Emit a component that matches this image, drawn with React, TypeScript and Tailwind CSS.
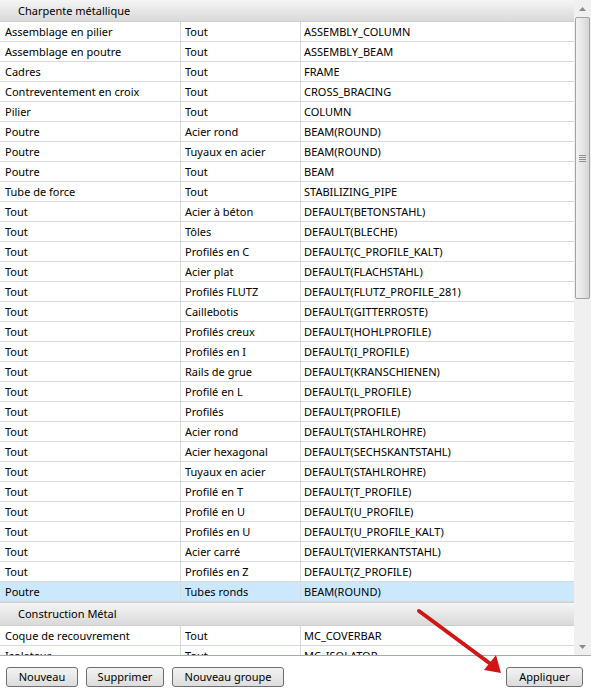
import React from "react";

type Row = [string, string, string];

const rows1: Row[] = [
  ["Assemblage en pilier", "Tout", "ASSEMBLY_COLUMN"],
  ["Assemblage en poutre", "Tout", "ASSEMBLY_BEAM"],
  ["Cadres", "Tout", "FRAME"],
  ["Contreventement en croix", "Tout", "CROSS_BRACING"],
  ["Pilier", "Tout", "COLUMN"],
  ["Poutre", "Acier rond", "BEAM(ROUND)"],
  ["Poutre", "Tuyaux en acier", "BEAM(ROUND)"],
  ["Poutre", "Tout", "BEAM"],
  ["Tube de force", "Tout", "STABILIZING_PIPE"],
  ["Tout", "Acier à béton", "DEFAULT(BETONSTAHL)"],
  ["Tout", "Tôles", "DEFAULT(BLECHE)"],
  ["Tout", "Profilés en C", "DEFAULT(C_PROFILE_KALT)"],
  ["Tout", "Acier plat", "DEFAULT(FLACHSTAHL)"],
  ["Tout", "Profilés FLUTZ", "DEFAULT(FLUTZ_PROFILE_281)"],
  ["Tout", "Caillebotis", "DEFAULT(GITTERROSTE)"],
  ["Tout", "Profilés creux", "DEFAULT(HOHLPROFILE)"],
  ["Tout", "Profilés en I", "DEFAULT(I_PROFILE)"],
  ["Tout", "Rails de grue", "DEFAULT(KRANSCHIENEN)"],
  ["Tout", "Profilé en L", "DEFAULT(L_PROFILE)"],
  ["Tout", "Profilés", "DEFAULT(PROFILE)"],
  ["Tout", "Acier rond", "DEFAULT(STAHLROHRE)"],
  ["Tout", "Acier hexagonal", "DEFAULT(SECHSKANTSTAHL)"],
  ["Tout", "Tuyaux en acier", "DEFAULT(STAHLROHRE)"],
  ["Tout", "Profilé en T", "DEFAULT(T_PROFILE)"],
  ["Tout", "Profilé en U", "DEFAULT(U_PROFILE)"],
  ["Tout", "Profilés en U", "DEFAULT(U_PROFILE_KALT)"],
  ["Tout", "Acier carré", "DEFAULT(VIERKANTSTAHL)"],
  ["Tout", "Profilés en Z", "DEFAULT(Z_PROFILE)"],
];

const rows2: Row[] = [
  ["Coque de recouvrement", "Tout", "MC_COVERBAR"],
  ["Isolateur", "Tout", "MC_ISOLATOR"],
];

function GroupHeader({ label, h }: { label: string; h: string }) {
  return (
    <div
      className={
        "shrink-0 flex items-center pl-[18px] pt-[1px] bg-gradient-to-b from-[#f5f5f5] to-[#d9d9d9] border-b border-[#cfcfcf] " +
        h
      }
    >
      {label}
    </div>
  );
}

function DataRow({ r, selected }: { r: Row; selected?: boolean }) {
  return (
    <div
      className={
        "h-[20px] shrink-0 flex border-b border-[#d9d9d9] " +
        (selected ? "bg-[#cce8ff]" : "bg-white")
      }
    >
      <div className="w-[181px] shrink-0 pl-[5px] pt-[1px] border-r border-[#d9d9d9] flex items-center whitespace-nowrap overflow-hidden">
        {r[0]}
      </div>
      <div className="w-[120px] shrink-0 pl-[4px] pt-[1px] border-r border-[#d9d9d9] flex items-center whitespace-nowrap overflow-hidden">
        {r[1]}
      </div>
      <div className="flex-1 pl-[3px] pt-[1px] flex items-center whitespace-nowrap overflow-hidden">
        {r[2]}
      </div>
    </div>
  );
}

function Btn({ label, w }: { label: string; w: string }) {
  return (
    <button
      className={
        "h-[20px] rounded-[3px] border border-[#707070] bg-gradient-to-b from-[#f3f3f3] to-[#dcdcdc] flex items-center justify-center text-black " +
        w
      }
    >
      {label}
    </button>
  );
}

export default function App() {
  return (
    <div
      className="relative w-[591px] h-[690px] bg-white text-black text-[11px] flex flex-col overflow-hidden"
      style={{ fontFamily: '"Noto Sans", "Open Sans", sans-serif' }}
    >
      <div className="h-[655px] shrink-0 flex">
        <div className="flex-1 flex flex-col overflow-hidden">
          <GroupHeader label="Charpente métallique" h="h-[22px]" />
          {rows1.map((r, i) => (
            <DataRow key={i} r={r} />
          ))}
          <DataRow r={["Poutre", "Tubes ronds", "BEAM(ROUND)"]} selected />
          <GroupHeader label="Construction Métal" h="h-[24px] border-t border-t-[#d0d0d0]" />
          {rows2.map((r, i) => (
            <DataRow key={"b" + i} r={r} />
          ))}
        </div>
        <div className="w-[17px] shrink-0 bg-[#f0f0f0] flex flex-col items-center">
          <div className="h-[17px] w-full flex items-center justify-center">
            <svg width="7" height="4" viewBox="0 0 7 4">
              <path d="M0 4 L3.5 0 L7 4 Z" fill="#8a8a8a" />
            </svg>
          </div>
          <div className="h-[282px] w-[15px] rounded-[2px] border border-[#a3a3a3] bg-gradient-to-r from-[#f2f2f2] via-[#e6e6e6] to-[#d4d4d4] flex flex-col items-center justify-center gap-[1px]">
            <div className="w-[7px] h-[1px] bg-[#8e8e8e]" />
            <div className="w-[7px] h-[1px] bg-[#8e8e8e]" />
            <div className="w-[7px] h-[1px] bg-[#8e8e8e]" />
            <div className="w-[7px] h-[1px] bg-[#8e8e8e]" />
          </div>
          <div className="flex-1" />
          <div className="h-[17px] w-full flex items-center justify-center">
            <svg width="7" height="4" viewBox="0 0 7 4">
              <path d="M0 0 L3.5 4 L7 0 Z" fill="#8a8a8a" />
            </svg>
          </div>
        </div>
      </div>
      <div className="h-[1px] shrink-0 bg-[#9fabbb]" />
      <div className="flex-1 flex items-start pt-[11px] pl-[6px] pr-[8px]">
        <div className="flex gap-[8px]">
          <Btn label="Nouveau" w="w-[72px]" />
          <Btn label="Supprimer" w="w-[78px]" />
          <Btn label="Nouveau groupe" w="w-[112px]" />
        </div>
        <div className="flex-1" />
        <Btn label="Appliquer" w="w-[77px]" />
      </div>
      <svg
        className="absolute left-0 top-0 pointer-events-none"
        width="591"
        height="690"
        viewBox="0 0 591 690"
      >
        <line x1="419" y1="611" x2="492" y2="665" stroke="#d01515" strokeWidth="4" strokeLinecap="round" />
        <path d="M501 673 L484 670 L496 655 Z" fill="#d01515" />
      </svg>
    </div>
  );
}
